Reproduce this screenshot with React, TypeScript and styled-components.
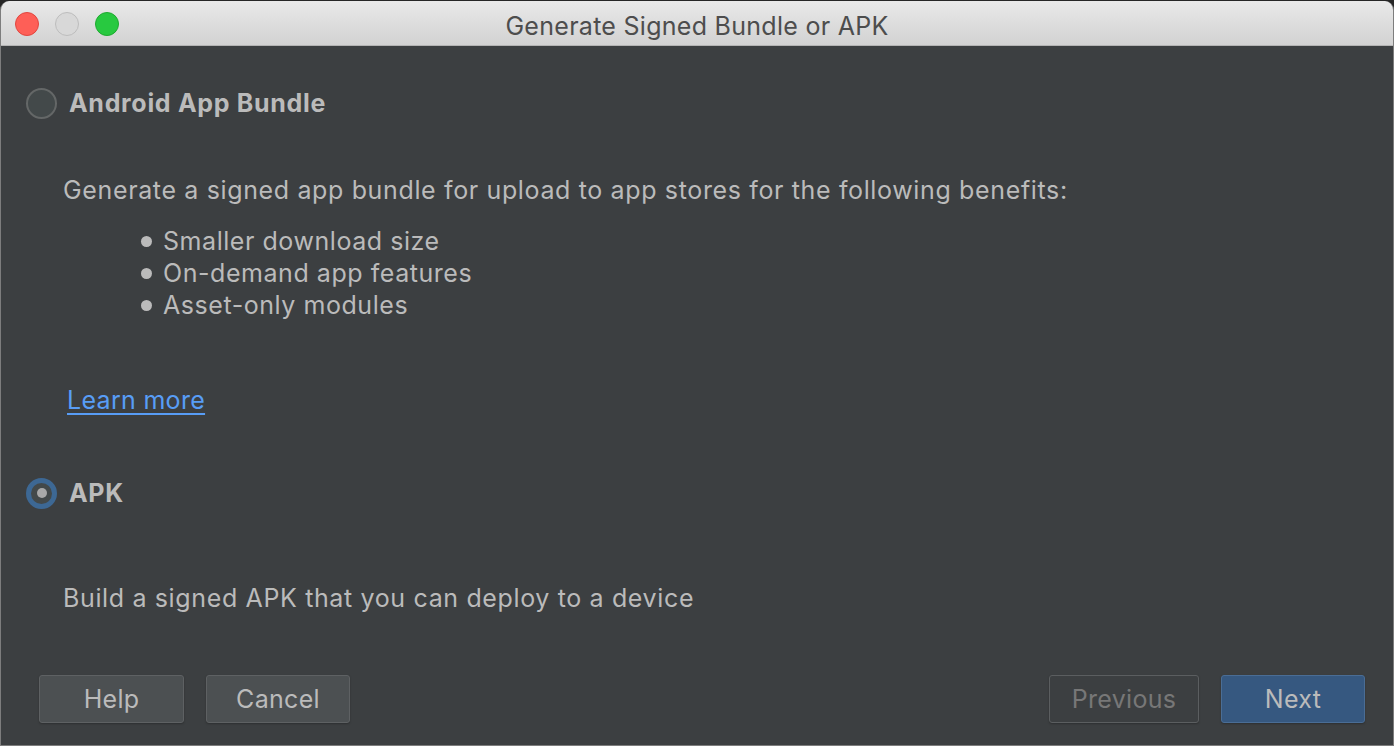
import React from "react";
import styled, { createGlobalStyle } from "styled-components";

const Global = createGlobalStyle`
  html, body { margin: 0; padding: 0; background: #262626; }
  body { width: 1394px; height: 746px; overflow: hidden; }
  * { box-sizing: border-box; }
`;

const Window = styled.div`
  width: 1394px;
  height: 745px;
  margin-top: 1px;
  display: flex;
  flex-direction: column;
  border-radius: 9px 9px 0 0;
  overflow: hidden;
  background: #3c3f41;
  border-left: 1px solid #7d7d7d;
  border-right: 1px solid #7d7d7d;
  border-bottom: 1px solid #7d7d7d;
  font-family: Inter, "Liberation Sans", Arial, sans-serif;
`;

const TitleBar = styled.div`
  position: relative;
  height: 45px;
  flex: none;
  display: flex;
  align-items: center;
  justify-content: center;
  background: linear-gradient(#e9e9e9, #d2d2d2);
  border-bottom: 1px solid #b4b4b4;
`;

const Lights = styled.div`
  position: absolute;
  left: 14px;
  top: 11px;
  display: flex;
  gap: 16px;
`;

const Light = styled.span<{ $c: string; $b: string }>`
  width: 24px;
  height: 24px;
  border-radius: 50%;
  background: ${(p) => p.$c};
  border: 1px solid ${(p) => p.$b};
`;

const Title = styled.div`
  font-size: 25px;
  color: #4d4d4d;
  letter-spacing: 0.28px;
  padding-top: 6px;
`;

const Body = styled.div`
  flex: 1;
  display: flex;
  flex-direction: column;
  padding: 0 28px 22px 25px;
`;

const OptionRow = styled.div<{ $top: number }>`
  display: flex;
  align-items: center;
  gap: 12px;
  margin-top: ${(p) => p.$top}px;
  height: 32px;
`;

const Radio = styled.span<{ $on?: boolean }>`
  width: 31px;
  height: 31px;
  border-radius: 50%;
  display: flex;
  align-items: center;
  justify-content: center;
  background: #43494a;
  border: ${(p) => (p.$on ? "5px solid #3d6894" : "2px solid #646767")};
  &::after {
    content: "";
    display: ${(p) => (p.$on ? "block" : "none")};
    width: 10px;
    height: 10px;
    border-radius: 50%;
    background: #a9a9a9;
  }
`;

const OptionLabel = styled.span`
  font-size: 25px;
  font-weight: 700;
  letter-spacing: 0.7px;
  color: #bbbbbb;
`;

const Text = styled.div<{ $top: number }>`
  font-size: 25px;
  line-height: 32px;
  letter-spacing: 0.64px;
  color: #bbbbbb;
  margin-left: 37px;
  margin-top: ${(p) => p.$top}px;
`;

const List = styled.ul`
  list-style: none;
  margin: 19px 0 0 115px;
  padding: 0;
`;

const Item = styled.li`
  display: flex;
  align-items: center;
  gap: 11px;
  font-size: 25px;
  line-height: 32px;
  letter-spacing: 0.55px;
  color: #bbbbbb;
  &::before {
    content: "";
    width: 11px;
    height: 11px;
    border-radius: 50%;
    background: #bbbbbb;
  }
`;

const Link = styled.a`
  align-self: flex-start;
  font-size: 25px;
  line-height: 32px;
  letter-spacing: 0.3px;
  color: #589df6;
  text-decoration: underline;
  text-decoration-thickness: 2px;
  text-underline-offset: 4px;
  margin: 63px 0 0 41px;
`;

const Footer = styled.div`
  margin-top: auto;
  display: flex;
  align-items: center;
  gap: 22px;
  padding-left: 13px;
`;

const Spacer = styled.div`
  flex: 1;
`;

const Button = styled.button<{ $kind?: "default" | "primary" | "disabled"; $w: number }>`
  width: ${(p) => p.$w}px;
  height: 48px;
  border-radius: 3px;
  font-family: inherit;
  font-size: 25px;
  letter-spacing: 0.3px;
  box-shadow: 0 1px 2px rgba(0, 0, 0, 0.25);
  background: ${(p) =>
    p.$kind === "primary" ? "#365880" : p.$kind === "disabled" ? "#3c3f41" : "#4c5052"};
  border: 1px solid
    ${(p) => (p.$kind === "primary" ? "#4a6d95" : p.$kind === "disabled" ? "#5b5e60" : "#5e6163")};
  color: ${(p) => (p.$kind === "disabled" ? "#777777" : "#bbbbbb")};
`;

export default function App() {
  return (
    <>
      <Global />
      <Window>
        <TitleBar>
          <Lights>
            <Light $c="#fe5f57" $b="#e1463f" />
            <Light $c="#d8d8d8" $b="#bdbdbd" />
            <Light $c="#28c940" $b="#1eaa30" />
          </Lights>
          <Title>Generate Signed Bundle or APK</Title>
        </TitleBar>
        <Body>
          <OptionRow $top={41}>
            <Radio />
            <OptionLabel>Android App Bundle</OptionLabel>
          </OptionRow>
          <Text $top={55}>
            Generate a signed app bundle for upload to app stores for the following benefits:
          </Text>
          <List>
            <Item>Smaller download size</Item>
            <Item>On-demand app features</Item>
            <Item>Asset-only modules</Item>
          </List>
          <Link>Learn more</Link>
          <OptionRow $top={61}>
            <Radio $on />
            <OptionLabel>APK</OptionLabel>
          </OptionRow>
          <Text $top={73}>Build a signed APK that you can deploy to a device</Text>
          <Footer>
            <Button $w={145}>Help</Button>
            <Button $w={144}>Cancel</Button>
            <Spacer />
            <Button $w={150} $kind="disabled">Previous</Button>
            <Button $w={144} $kind="primary">Next</Button>
          </Footer>
        </Body>
      </Window>
    </>
  );
}
